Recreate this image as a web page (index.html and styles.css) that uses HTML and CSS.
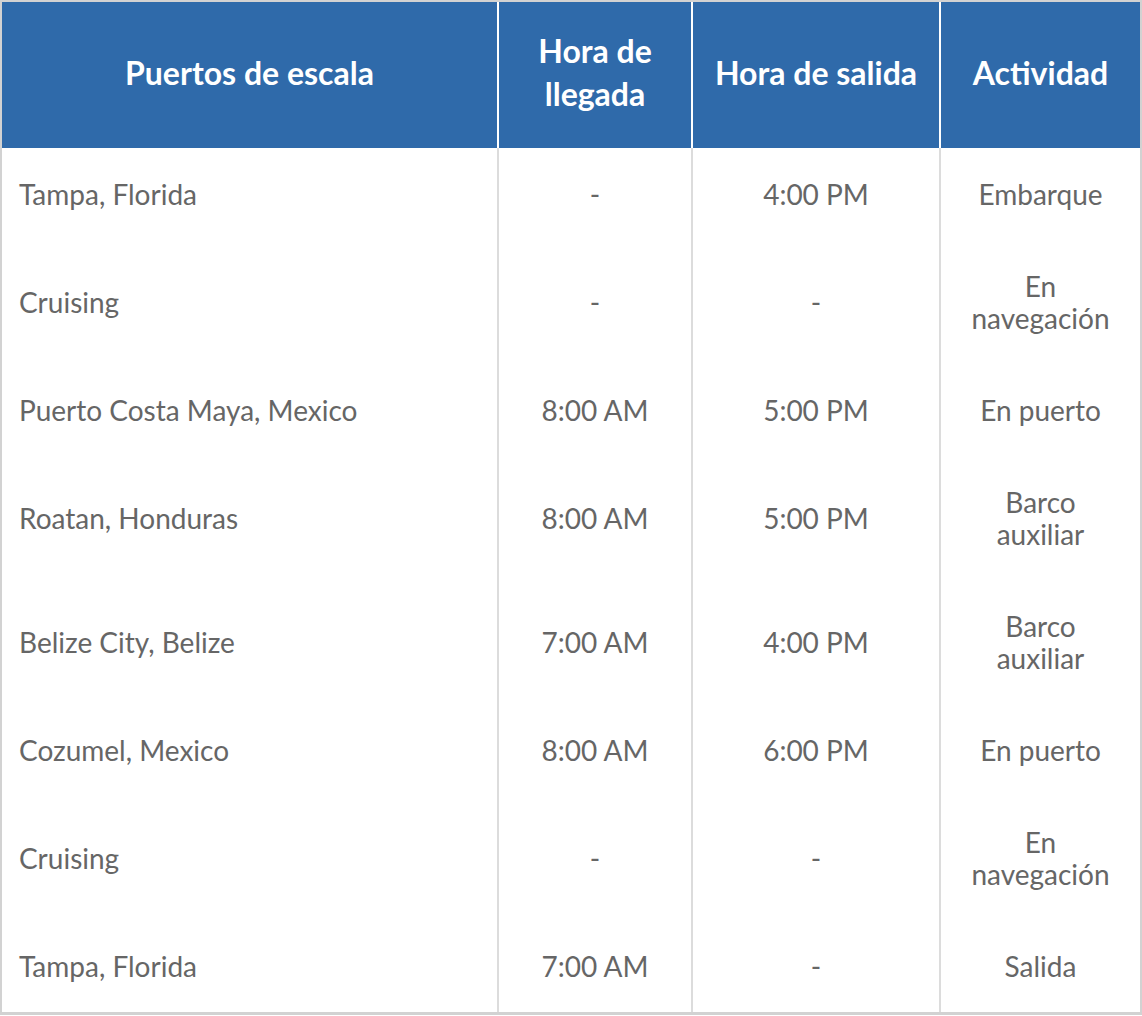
FILE: index.html
```html
<!DOCTYPE html>
<html lang="es">
<head>
<meta charset="utf-8">
<title>Itinerario</title>
<link rel="stylesheet" href="styles.css">
</head>
<body>
<table class="itinerary">
  <colgroup>
    <col class="c-port">
    <col class="c-arr">
    <col class="c-dep">
    <col class="c-act">
  </colgroup>
  <thead>
    <tr>
      <th>Puertos de escala</th>
      <th>Hora de llegada</th>
      <th>Hora de salida</th>
      <th>Actividad</th>
    </tr>
  </thead>
  <tbody>
    <tr><td class="port">Tampa, Florida</td><td>-</td><td>4:00 PM</td><td>Embarque</td></tr>
    <tr><td class="port">Cruising</td><td>-</td><td>-</td><td>En navegación</td></tr>
    <tr><td class="port">Puerto Costa Maya, Mexico</td><td>8:00 AM</td><td>5:00 PM</td><td>En puerto</td></tr>
    <tr><td class="port">Roatan, Honduras</td><td>8:00 AM</td><td>5:00 PM</td><td>Barco auxiliar</td></tr>
    <tr><td class="port">Belize City, Belize</td><td>7:00 AM</td><td>4:00 PM</td><td>Barco auxiliar</td></tr>
    <tr><td class="port">Cozumel, Mexico</td><td>8:00 AM</td><td>6:00 PM</td><td>En puerto</td></tr>
    <tr><td class="port">Cruising</td><td>-</td><td>-</td><td>En navegación</td></tr>
    <tr><td class="port">Tampa, Florida</td><td>7:00 AM</td><td>-</td><td>Salida</td></tr>
  </tbody>
</table>
</body>
</html>
```
FILE: styles.css
```css
html, body {
  margin: 0;
  padding: 0;
  background: #ffffff;
}

.itinerary {
  width: 1142px;
  table-layout: fixed;
  border-collapse: separate;
  border-spacing: 0;
  border-top: 2px solid #d2d2d2;
  border-left: 2px solid #d2d2d2;
  border-right: 2px solid #d2d2d2;
  border-bottom: 3px solid #d2d2d2;
  font-family: Lato, "Liberation Sans", sans-serif;
}

.c-port { width: 497px; }
.c-arr { width: 194px; }
.c-dep { width: 248px; }
.c-act { width: 199px; }

.itinerary th {
  box-sizing: border-box;
  background: #2f6aaa;
  color: #ffffff;
  font-size: 32px;
  font-weight: 700;
  line-height: 43px;
  padding: 27px 17px 33px;
  text-align: center;
  vertical-align: middle;
  border-right: 2px solid #ffffff;
}

.itinerary th:last-child,
.itinerary td:last-child {
  border-right: none;
}

.itinerary td {
  box-sizing: border-box;
  color: #666666;
  font-size: 28px;
  line-height: 32px;
  padding: 30px 17px;
  text-align: center;
  vertical-align: middle;
  border-right: 2px solid #dcdcdc;
}

.itinerary td.port {
  text-align: left;
}
```
